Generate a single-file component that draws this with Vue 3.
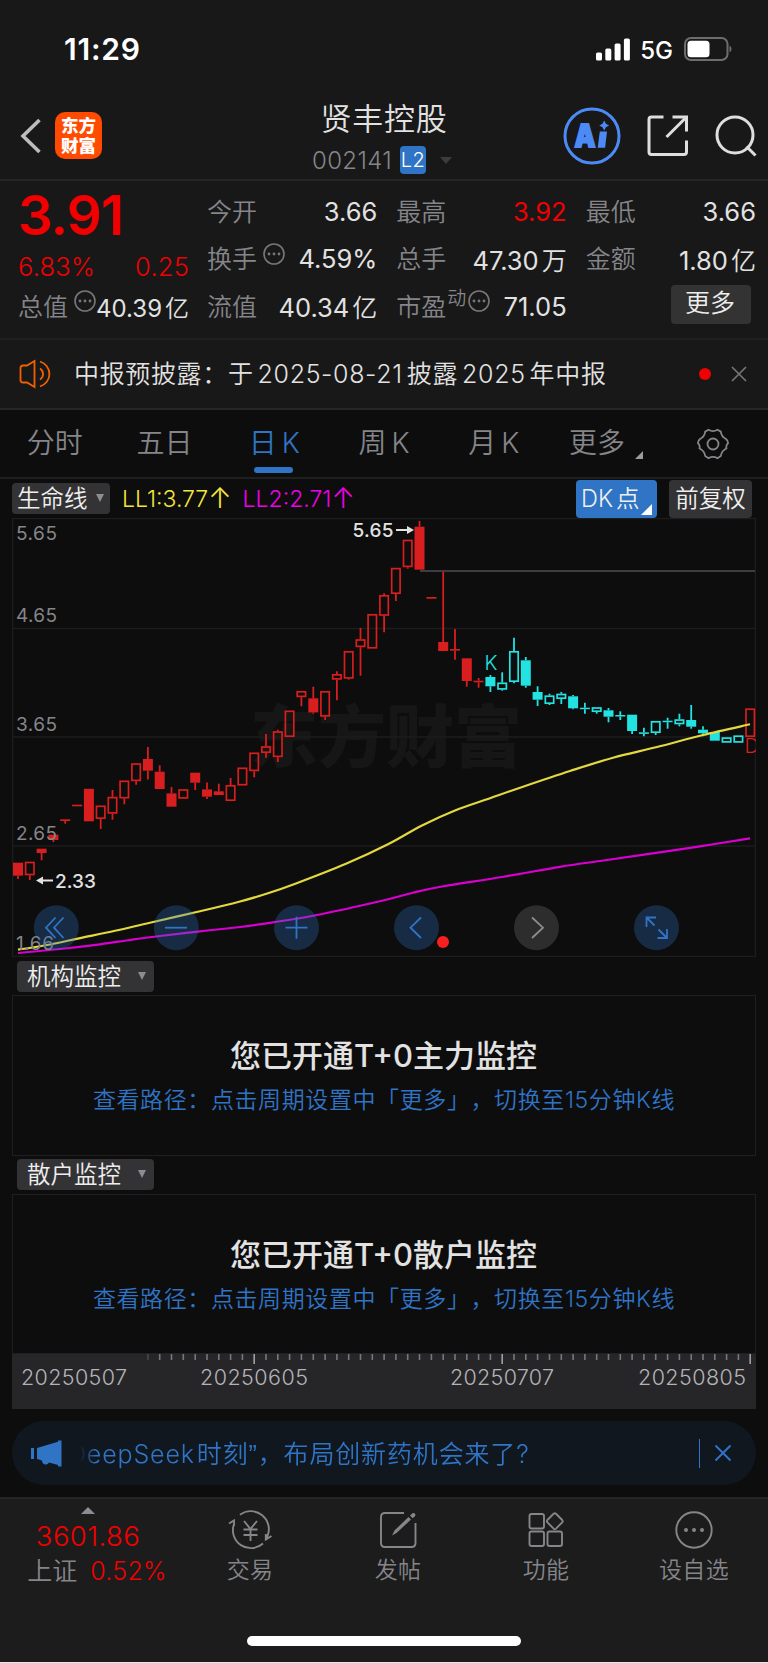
<template>
  <div class="app-page">
    <header class="top">
      <div class="status-bar">
        <span class="clock">11:29</span>
        <div class="status-icons">
          <svg class="signal" width="34" height="23" viewBox="0 0 34 23">
            <rect x="0" y="14.5" width="6" height="8" rx="1.6" />
            <rect x="9.3" y="10.5" width="6" height="12" rx="1.6" />
            <rect x="18.6" y="5.5" width="6" height="17" rx="1.6" />
            <rect x="27.9" y="0.5" width="6" height="22" rx="1.6" />
          </svg>
          <span class="network">5G</span>
          <svg class="battery" width="49" height="24" viewBox="0 0 49 24">
            <rect x="1" y="1" width="42.5" height="22" rx="6" class="battery-shell" />
            <rect x="3.5" y="3.7" width="22" height="16.6" rx="3.5" fill="#fff" />
            <path d="M45.5 8.5 a4 4 0 0 1 0 7z" fill="#6d6d6d" />
          </svg>
        </div>
      </div>

      <div class="nav-bar">
        <svg class="back" width="22" height="36" viewBox="0 0 22 36">
          <path d="M19.5 2 L3 18 L19.5 34" />
        </svg>
        <div class="logo"><span>东方</span><span>财富</span></div>
        <div class="title">
          <div class="stock-name">贤丰控股</div>
          <div class="stock-code">
            <span>002141</span><span class="level">L2</span><i class="caret"></i>
          </div>
        </div>
        <div class="actions">
          <svg width="58" height="58" viewBox="0 0 58 58">
            <circle cx="29" cy="29" r="27" fill="none" stroke="#4c8bf5" stroke-width="3" />
            <text x="11.5" y="39.5" textLength="21" lengthAdjust="spacingAndGlyphs" class="ai-text">A</text>
            <path d="M36.8 24.5h7.2l-1.9 16.2h-7.4z" fill="#4c8bf5" />
            <path d="M41.2 13.5l1.7 3.2 3.2 1.8-3.2 1.8-1.7 3.2-1.7-3.2-3.2-1.8 3.2-1.8z" fill="#4c8bf5" />
          </svg>
          <svg class="share" width="42" height="42" viewBox="0 0 42 42">
            <path d="M16.5 2H4.5Q2 2 2 4.5V37Q2 39.5 4.5 39.5H37Q39.5 39.5 39.5 37V25.5" />
            <path d="M25.5 2H39.5V16.5" />
            <path d="M38.5 3L19.5 22" />
          </svg>
          <svg class="search" width="42" height="42" viewBox="0 0 42 42">
            <circle cx="20" cy="20" r="18" />
            <path d="M31.5 31.5L40.5 40.5" />
          </svg>
        </div>
      </div>

      <section class="quote">
        <div class="quote-main">
          <div class="price">3.91</div>
          <div class="change"><span>6.83%</span><span>0.25</span></div>
          <div class="cell">
            <span class="label">总值</span>
            <DotsIcon class="info" />
            <span class="value small">40.39<b>亿</b></span>
          </div>
        </div>
        <div class="quote-grid">
          <div v-for="cell in cells" :key="cell.label" class="cell">
            <span class="label">{{ cell.label }}</span>
            <sup v-if="cell.sup" class="sup">{{ cell.sup }}</sup>
            <DotsIcon v-if="cell.info" class="info" />
            <span :class="['value', { up: cell.up }]">{{ cell.value }}<b v-if="cell.unit">{{ cell.unit }}</b></span>
          </div>
          <div class="cell"><button class="more">更多</button></div>
        </div>
      </section>

      <section class="notice">
        <svg class="horn" width="34" height="30" viewBox="0 0 34 30">
          <path d="M15.5 2L8 6.5H4Q1.5 6.5 1.5 9V21Q1.5 23.5 4 23.5H8L15.5 28Z" />
          <path d="M21 9.5A6.5 6.5 0 0 1 21 20.5" />
          <path d="M21 2.5A13 13 0 0 1 21 27.5" />
        </svg>
        <p class="notice-text">中报预披露：于<i></i>2025-08-21<i></i>披露<i></i>2025<i></i>年中报</p>
        <span class="dot"></span>
        <svg class="close" width="16" height="16" viewBox="0 0 16 16"><path d="M1 1L15 15M15 1L1 15" /></svg>
      </section>
    </header>

    <nav class="tabs">
      <div v-for="tab in tabs" :key="tab.text" :class="['tab', { active: tab.active }]">
        {{ tab.text }}<span v-if="tab.k" class="tab-k">K</span>
        <i v-if="tab.corner" class="corner"></i>
      </div>
      <div class="tab">
        <svg class="gear" width="32" height="32" viewBox="0 0 32 32">
          <path d="M11.5 1.8Q16 4.4 20.500 1.8L23.8 3.6Q24.4 8.600 29 11Q31.300 13 31 15.2Q28.800 17 29.400 20.500Q24.400 23 23.800 28L20.500 30.200Q16 27.600 11.500 30.200L8.200 28Q7.600 23 2.600 20.500Q3.200 17 1 15.200Q.7 13 3 11Q7.600 8.600 8.200 3.600Z" />
          <circle cx="16" cy="16" r="5.5" />
        </svg>
      </div>
    </nav>

    <section class="indicators">
      <span class="tag tag-line">生命线<i class="down"></i></span>
      <span class="ll yellow">LL1:3.77<em>↑</em></span>
      <span class="ll magenta">LL2:2.71<em>↑</em></span>
      <span class="chip blue">DK<b>点</b><i></i></span>
      <span class="chip">前复权</span>
    </section>

    <svg class="chart" width="744" height="439" viewBox="12 518 744 439">
      <text x="386" y="762" text-anchor="middle" class="watermark">东方财富</text>
      <g class="grid-lines">
        <rect x="12.5" y="518.5" width="743" height="438" />
        <path d="M12 628.5H756M12 737H756M12 846H756" />
      </g>
      <path d="M420 571H755" stroke="#3d3d3f" stroke-width="2" />

      <g v-for="(c, i) in candles" :key="i" :class="['candle', c[0]]">
        <path v-if="c[2] < c[3]" :d="`M${cx(i)} ${c[2]}V${c[3]}`" />
        <path v-if="c[5] > c[4]" :d="`M${cx(i)} ${c[4]}V${c[5]}`" />
        <rect
          v-if="c[1]"
          class="solid"
          :x="cx(i) - 5"
          :y="c[3]"
          :width="10"
          :height="c[4] - c[3]"
        />
        <rect
          v-else
          class="hollow"
          :x="cx(i) - 4.2"
          :y="c[3] + 0.8"
          :width="8.4"
          :height="c[4] - c[3] - 1.6"
        />
      </g>

      <path :d="smooth(yellowLine)" class="ma" stroke="#e3d93f" />
      <path :d="smooth(magentaLine)" class="ma" stroke="#d800d0" />

      <text x="484.5" y="670" class="mark" fill="#22e2e2">K</text>
      <text x="744.5" y="753" class="mark" fill="#d81e1e">D</text>

      <g class="axis-labels">
        <text x="16" y="539.5" textLength="41">5.65</text>
        <text x="16" y="621.5" textLength="41">4.65</text>
        <text x="16" y="731" textLength="41">3.65</text>
        <text x="16" y="840" textLength="41">2.65</text>
        <text x="16" y="949.5" textLength="38">1.66</text>
      </g>

      <g class="peak">
        <text x="352.5" y="537" textLength="41">5.65</text>
        <path d="M396 530H409" />
        <path d="M407 526L414 530L407 534Z" class="head" />
        <text x="55" y="888" textLength="41">2.33</text>
        <path d="M41 880.5H53" />
        <path d="M43 876.5L36 880.5L43 884.5Z" class="head" />
      </g>

      <g class="controls">
        <circle cx="56.3" cy="927.7" r="22.5" />
        <path d="M55.5 917.5L46 927.7L55.5 938M63.5 917.5L54 927.7L63.5 938" />
        <circle cx="176.3" cy="927.7" r="22.5" />
        <path d="M165 927.7H187" />
        <circle cx="296.5" cy="927.7" r="22.5" />
        <path d="M285.5 927.7H307.5M296.5 916.7V938.7" />
        <circle cx="416.5" cy="927.7" r="22.5" />
        <path d="M421 917.5L410.5 927.7L421 938" />
        <circle cx="536.5" cy="927.7" r="22.5" class="off" />
        <path d="M532 917.5L543 927.7L532 938" class="off" />
        <circle cx="656.5" cy="927.7" r="22.5" />
        <path d="M646.5 927V917.5H656M646.5 917.5L654.5 925.5M667 929V938H657.5M667 938L658.5 929.5" />
      </g>
      <circle cx="443" cy="942" r="6" fill="#f52020" />
    </svg>

    <template v-for="panel in panels" :key="panel.name">
      <div class="panel-head">
        <span class="tag">{{ panel.name }}<i class="down"></i></span>
      </div>
      <div class="panel">
        <h3>{{ panel.title }}</h3>
        <p>查看路径：点击周期设置中「更多」，切换至15分钟K线</p>
      </div>
    </template>

    <div class="timeline">
      <svg width="744" height="55" viewBox="12 1354 744 55">
        <rect
          v-for="n in 52"
          :key="n"
          :x="cx(n + 10) - 0.8"
          y="1354"
          width="1.6"
          :height="isMajor(n + 10) ? 10 : 6"
          :opacity="n === 1 ? 0.4 : 1"
          :class="{ major: isMajor(n + 10) }"
        />
        <text x="21" y="1384.5" textLength="106">20250507</text>
        <text x="200" y="1384.5" textLength="108">20250605</text>
        <text x="450" y="1384.5" textLength="104">20250707</text>
        <text x="638" y="1384.5" textLength="108">20250805</text>
      </svg>
    </div>

    <div class="banner-wrap">
      <div class="banner">
        <svg class="megaphone" width="31" height="27" viewBox="0 0 31 27">
          <path d="M0 8H3V19H0ZM6 8L27 1.8V0.5H30.5V26.5H27V25L18 22.5Q17 25 14 24.5Q11 23.5 11 20.5L6 19Z" />
        </svg>
        <div class="banner-clip">
          <span class="banner-text">DeepSeek<i></i>时刻<q>”</q>，布局创新药机会来了?</span>
        </div>
        <span class="bar"></span>
        <svg class="banner-close" width="18" height="18" viewBox="0 0 18 18"><path d="M1.5 1.5L16.5 16.5M16.5 1.5L1.5 16.5" /></svg>
      </div>
    </div>

    <footer class="bottom">
      <div class="bottom-items">
        <div class="index">
          <i class="up-caret"></i>
          <div class="index-value">3601.86</div>
          <div class="index-line"><span>上证</span><b>0.52%</b></div>
        </div>
        <div class="item">
          <svg width="44" height="40" viewBox="0 0 44 40">
            <path d="M12 4.8A18 18 0 0 1 39.5 26L38 29.5M43.5 26L37.8 29.5L37.8 24" />
            <path d="M35 33.5A18 18 0 0 1 6 14V10.5L1 13.5M6 10.5V16" />
            <path d="M16 11L22.5 19L29 11M15.5 19.5H29.5M15.5 25H29.5M22.5 19V31" />
          </svg>
          <span>交易</span>
        </div>
        <div class="item">
          <svg width="40" height="40" viewBox="0 0 40 40">
            <path d="M26 3H7Q3 3 3 7V33Q3 37 7 37H33.5Q37.5 37 37.5 33V13" />
            <path d="M14 25.5L16.5 20.5L30.5 7L33 9.5L18.5 23Z" class="fill" />
            <path d="M32 5.5L34.5 3.2Q36 2.5 37 3.7Q38 4.8 37 6.2L34.6 8.3Z" class="fill" />
          </svg>
          <span>发帖</span>
        </div>
        <div class="item">
          <svg width="40" height="40" viewBox="0 0 40 40">
            <rect x="3.5" y="4" width="14.5" height="14.5" rx="2" />
            <rect x="3.5" y="21.5" width="14.5" height="14.5" rx="2" />
            <rect x="21.5" y="21.5" width="14.5" height="14.5" rx="2" />
            <path d="M27.6 3.8Q28.8 2.7 30 3.8L36.2 10Q37.2 11.2 36.2 12.4L30 18.6Q28.8 19.7 27.6 18.6L21.4 12.4Q20.4 11.2 21.4 10Z" />
          </svg>
          <span>功能</span>
        </div>
        <div class="item">
          <svg width="40" height="40" viewBox="0 0 40 40">
            <circle cx="20" cy="20" r="17.7" />
            <circle cx="12" cy="20" r="2" class="fill" />
            <circle cx="20" cy="20" r="2" class="fill" />
            <circle cx="28" cy="20" r="2" class="fill" />
          </svg>
          <span>设自选</span>
        </div>
      </div>
      <div class="home-bar"></div>
    </footer>
  </div>
</template>

<script setup>
import { h } from 'vue'

// Small circled ellipsis shown next to some labels
const DotsIcon = () =>
  h('svg', { width: 22, height: 22, viewBox: '0 0 22 22' }, [
    h('circle', { cx: 11, cy: 11, r: 10, fill: 'none', stroke: '#77777b', 'stroke-width': 1.6 }),
    ...[6, 11, 16].map((x) => h('circle', { cx: x, cy: 11, r: 1.4, fill: '#77777b' }))
  ])

const cells = [
  { label: '今开', value: '3.66' },
  { label: '最高', value: '3.92', up: true },
  { label: '最低', value: '3.66' },
  { label: '换手', value: '4.59%', info: true },
  { label: '总手', value: '47.30', unit: '万' },
  { label: '金额', value: '1.80', unit: '亿' },
  { label: '流值', value: '40.34', unit: '亿' },
  { label: '市盈', value: '71.05', sup: '动', info: true }
]

const tabs = [
  { text: '分时' },
  { text: '五日' },
  { text: '日', k: true, active: true },
  { text: '周', k: true },
  { text: '月', k: true },
  { text: '更多', corner: true }
]

const panels = [
  { name: '机构监控', title: '您已开通T+0主力监控' },
  { name: '散户监控', title: '您已开通T+0散户监控' }
]

const cx = (i) => +(18 + i * 11.81).toFixed(1)
const isMajor = (i) => [20, 41, 62].includes(i)

// [color, filled, high, bodyTop, bodyBottom, low]
const candles = [
  ['r', 1, 862.7, 862.7, 875.7, 879],
  ['r', 0, 861.7, 861.7, 875.3, 880],
  ['r', 1, 848.7, 848.7, 853, 860.3],
  ['r', 1, 834.7, 834.7, 840, 842],
  ['r', 1, 819.3, 819.3, 821, 823.7],
  ['r', 1, 804.7, 804.7, 806.3, 806],
  ['r', 1, 788.8, 788.8, 821.3, 821],
  ['r', 0, 805.5, 805.5, 819, 829],
  ['r', 0, 790, 796.8, 813.7, 819.7],
  ['r', 0, 780.5, 780.5, 798.5, 804.3],
  ['r', 0, 763.2, 763.2, 781.2, 784.7],
  ['r', 1, 747, 759, 770.7, 779.5],
  ['r', 1, 765.3, 771.7, 789, 789],
  ['r', 1, 787, 793.4, 806.7, 806],
  ['r', 0, 789.2, 789.2, 798.7, 798],
  ['r', 1, 772.7, 772.7, 782.7, 790],
  ['r', 1, 782.4, 789.4, 796.7, 799],
  ['r', 1, 783.7, 791.3, 795, 795],
  ['r', 0, 778, 785, 801, 801],
  ['r', 0, 767.5, 767.5, 785.5, 785],
  ['r', 0, 752.5, 752.5, 771.2, 777.3],
  ['r', 0, 734, 746.2, 753, 757.7],
  ['r', 0, 729.7, 731.2, 757.2, 762],
  ['r', 0, 710.5, 710.5, 737, 737],
  ['r', 0, 691, 691, 697.2, 706.3],
  ['r', 1, 686.7, 698.3, 712.4, 713.7],
  ['r', 0, 691, 691, 716.7, 720],
  ['r', 0, 671.3, 674, 679.7, 700.3],
  ['r', 0, 651, 651, 678.7, 679.7],
  ['r', 0, 628, 639.2, 647.2, 675.7],
  ['r', 0, 614, 614, 648.6, 648],
  ['r', 0, 593.3, 595, 615.8, 632.3],
  ['r', 0, 567.8, 567.8, 594, 601],
  ['r', 0, 539.7, 539.7, 567.2, 568.7],
  ['r', 1, 521, 526.7, 569.7, 569],
  ['r', 1, 597, 597, 598.7, 598],
  ['r', 1, 571.7, 642, 651, 651],
  ['r', 1, 629, 649, 650.6, 659.7],
  ['r', 1, 658.3, 658.3, 681, 686.7],
  ['r', 1, 678, 680.7, 682.3, 687.7],
  ['c', 1, 675, 677, 686.3, 692],
  ['c', 0, 672.3, 682.5, 689.7, 690.7],
  ['c', 0, 637.7, 651, 682, 683.3],
  ['c', 1, 657, 660.3, 685.7, 687.7],
  ['c', 1, 686.3, 692, 699.7, 706],
  ['c', 0, 693.7, 695.4, 704, 705],
  ['c', 0, 692, 693.7, 699, 704],
  ['c', 1, 695, 696.3, 708.3, 709.3],
  ['c', 1, 702.7, 707.7, 709.2, 713.7],
  ['c', 0, 707.2, 707.2, 712, 713.7],
  ['c', 1, 708, 710.3, 716.7, 722.3],
  ['c', 1, 711.3, 715, 716.5, 720],
  ['c', 1, 714.7, 714.7, 731, 734],
  ['c', 1, 727.7, 732.3, 733.9, 736.3],
  ['c', 0, 721, 721, 733, 735],
  ['c', 1, 717.7, 720.7, 722.2, 728.7],
  ['c', 0, 713.7, 719.3, 724.3, 726.3],
  ['c', 1, 705, 720, 726.7, 728.7],
  ['c', 1, 726.3, 729.7, 733.3, 736.3],
  ['c', 1, 732, 732, 740.7, 740],
  ['c', 0, 737.3, 737.3, 742.7, 742],
  ['c', 0, 735.4, 735.4, 742.7, 742],
  ['r', 0, 708.4, 708.4, 737, 736]
]

const yellowLine = [
  [18, 949.7], [50, 944.5], [79, 938.3], [115, 930.8], [150, 922.7], [200, 911.3],
  [240, 901.5], [268, 893.3], [296, 883.5], [346, 863.8], [388, 844.3], [422, 825.5],
  [455, 810.5], [490, 798.2], [523, 786.7], [570, 771], [613, 757.7], [657, 747],
  [703, 735], [750, 724.3]
]
const magentaLine = [
  [18, 953], [60, 949], [100, 944.3], [130, 940], [160, 936], [200, 931.3],
  [240, 927], [273, 922.3], [317, 915], [381, 901], [412, 893], [442, 886.5],
  [502, 877], [560, 866.8], [600, 861], [644, 854.7], [700, 846.3], [750, 838.3]
]

// Catmull-Rom spline through the points, as cubic segments
const smooth = (pts) => {
  let d = `M${pts[0]}`
  for (let i = 0; i < pts.length - 1; i++) {
    const p0 = pts[i - 1] || pts[i]
    const [p1, p2] = [pts[i], pts[i + 1]]
    const p3 = pts[i + 2] || p2
    const a = [p1[0] + (p2[0] - p0[0]) / 6, p1[1] + (p2[1] - p0[1]) / 6]
    const b = [p2[0] - (p3[0] - p1[0]) / 6, p2[1] - (p3[1] - p1[1]) / 6]
    d += `C${a} ${b} ${p2}`
  }
  return d
}
</script>

<style>
html,
body {
  margin: 0;
  background: #0d0d0d;
}
</style>

<style scoped>
.app-page {
  width: 768px;
  height: 1663px;
  overflow: hidden;
  display: flex;
  flex-direction: column;
  background: #0d0d0d;
  color: #e2e2e2;
  font-family: Inter, "Noto Sans CJK SC", sans-serif;
  font-weight: 350;
}

i,
em {
  font-style: normal;
}

.top {
  background: #181818;
}

.status-bar {
  height: 98px;
  padding: 0 35px 0 64px;
  display: flex;
  align-items: center;
  justify-content: space-between;
  box-sizing: border-box;
}

.clock {
  font-size: 30px;
  font-weight: 600;
  letter-spacing: 0.8px;
  color: #fff;
}

.status-icons {
  display: flex;
  align-items: center;
}

.signal {
  fill: #fff;
}

.network {
  margin: 3px 11px 0 10px;
  font-size: 24px;
  font-weight: 500;
  line-height: 24px;
  color: #fff;
}

.battery-shell {
  fill: none;
  stroke: #6d6d6d;
  stroke-width: 2;
}

.nav-bar {
  position: relative;
  height: 83px;
  box-sizing: border-box;
  padding: 0 11px 5px 20px;
  display: flex;
  align-items: center;
  border-bottom: 2px solid #262626;
}

.back {
  fill: none;
  stroke: #bdbdbd;
  stroke-width: 3.6;
}

.logo {
  width: 47px;
  height: 47px;
  margin-left: 13px;
  margin-top: -1px;
  border-radius: 10px;
  background: #ff4a00;
  display: flex;
  flex-direction: column;
  align-items: center;
  justify-content: center;
  color: #fff;
  font-size: 17.5px;
  font-weight: 900;
  line-height: 19.5px;
}

.title {
  position: absolute;
  left: 0;
  right: 0;
  top: 0;
  display: flex;
  flex-direction: column;
  align-items: center;
}

.stock-name {
  margin-top: 1px;
  font-size: 31px;
  letter-spacing: 0.8px;
  line-height: 40px;
}

.stock-code {
  display: flex;
  align-items: center;
  height: 28px;
  margin-top: 7px;
  margin-left: -4px;
  font-size: 24px;
  letter-spacing: 0.3px;
  color: #85858a;
}

.level {
  width: 26px;
  height: 28px;
  margin-left: 8px;
  border-radius: 4px;
  background: #2f74c5;
  color: #fff;
  font-size: 20px;
  line-height: 28px;
  text-align: center;
}

.caret {
  margin-left: 14px;
  border: 6.5px solid transparent;
  border-top: 7px solid #3c3c3c;
  border-bottom: 0;
}

.actions {
  margin-left: auto;
  display: flex;
  align-items: center;
}

.ai-text {
  fill: #4c8bf5;
  stroke: #4c8bf5;
  stroke-width: 1.8;
  font-size: 31px;
  font-weight: 900;
}

.share,
.search {
  margin-left: 26px;
  fill: none;
  stroke: #dedede;
  stroke-width: 3;
}

.quote {
  height: 159px;
  box-sizing: border-box;
  padding: 7px 12px 0 18px;
  display: flex;
  gap: 18px;
  border-bottom: 2px solid #202020;
}

.quote-main {
  width: 171px;
  display: flex;
  flex-direction: column;
}

.price {
  height: 55px;
  line-height: 55px;
  font-size: 55px;
  font-weight: 600;
  letter-spacing: -1px;
  color: #f00000;
}

.change {
  height: 40px;
  line-height: 47px;
  display: flex;
  justify-content: space-between;
  font-size: 25.5px;
  letter-spacing: 0.2px;
  color: #f00000;
}

.quote-grid {
  flex: 1;
  display: grid;
  grid-template-columns: repeat(3, 1fr);
  grid-auto-rows: 47.5px;
  column-gap: 19px;
}

.cell {
  height: 47.5px;
  display: flex;
  align-items: center;
}

.label {
  flex: none;
  margin-top: -4px;
  font-size: 25px;
  color: #85858a;
}

.sup {
  font-size: 19px;
  line-height: 20px;
  margin: -16px 0 0 1px;
  color: #85858a;
}

.info {
  flex: none;
  margin: -11px 0 0 6px;
}

.sup + .info {
  margin-left: 2px;
}

.value {
  margin-left: auto;
  margin-top: -1px;
  font-size: 25.5px;
  font-weight: 400;
  white-space: nowrap;
}

.value b {
  margin-left: 3px;
  font-weight: 350;
  font-size: 25px;
}

.value.small,
.value.small b {
  font-size: 24px;
}

.value.up {
  color: #f00000;
}

.more {
  width: 80px;
  height: 39px;
  margin: 0 5px 5px auto;
  border: 0;
  border-radius: 4px;
  background: #333;
  color: #eee;
  font: inherit;
  font-size: 25px;
  line-height: 37px;
  padding: 0 2px 2px 0;
}

.notice {
  height: 70px;
  box-sizing: border-box;
  padding: 0 21px 1px 19px;
  display: flex;
  align-items: center;
  border-bottom: 2px solid #262626;
}

.horn {
  fill: none;
  stroke: #f06000;
  stroke-width: 1.8;
}

.notice-text {
  margin: -4px 0 0 21px;
  font-size: 25px;
  letter-spacing: 0.65px;
  white-space: nowrap;
}

.notice-text i {
  margin-left: 4px;
}

.dot {
  width: 12px;
  height: 12px;
  margin-left: auto;
  border-radius: 50%;
  background: #f00000;
}

.close {
  margin-left: 20px;
  stroke: #77777b;
  stroke-width: 1.6;
}

.tabs {
  height: 69px;
  box-sizing: border-box;
  display: grid;
  grid-template-columns: repeat(7, 1fr);
  border-bottom: 2px solid #1f1f1f;
}

.tab {
  position: relative;
  display: flex;
  align-items: center;
  justify-content: center;
  font-size: 28px;
  line-height: 67px;
  color: #85858a;
}

.tab-k {
  margin-left: 5px;
}

.tab.active {
  color: #2f74c5;
}

.tab.active::after {
  content: "";
  position: absolute;
  left: 50%;
  bottom: 4px;
  width: 39px;
  height: 6px;
  margin-left: -20px;
  border-radius: 3px;
  background: #2f74c5;
}

.corner {
  margin: 22px -5px 0 10px;
  border-left: 8px solid transparent;
  border-bottom: 8px solid #9a9aa0;
}

.gear {
  fill: none;
  stroke: #85858a;
  stroke-width: 1.8;
}

.indicators {
  height: 39px;
  box-sizing: border-box;
  padding: 0 16px 0 12px;
  display: flex;
  align-items: center;
}

.tag {
  height: 31px;
  border-radius: 4px;
  background: #333335;
  color: #eee;
  font-size: 23.5px;
  line-height: 31px;
  display: flex;
  align-items: center;
}

.tag-line {
  width: 93px;
  padding-left: 5px;
}

.down {
  margin-left: 17px;
  margin-top: -1px;
  border: 4.5px solid transparent;
  border-top: 8px solid #8c8c92;
  border-bottom: 0;
}

.tag-line .down {
  margin-left: 8px;
}

.ll {
  display: flex;
  align-items: center;
  font-size: 23px;
  line-height: 30px;
  margin-left: 12px;
}

.ll em {
  font-size: 28px;
  font-weight: 300;
  margin: -2px -1px 0 0;
}

.yellow {
  color: #f2e63c;
}

.magenta {
  color: #f000e8;
}

.chip {
  position: relative;
  width: 83px;
  height: 38px;
  margin-left: 12px;
  border-radius: 4px;
  background: #333335;
  color: #f0f0f0;
  font-size: 23.5px;
  line-height: 38px;
  text-align: center;
}

.chip.blue {
  width: 76px;
  margin-left: auto;
  padding-left: 5px;
  text-align: left;
  background: #2f74c5;
}

.chip b {
  margin-left: 3px;
  font-weight: 350;
}

.chip i {
  position: absolute;
  right: 5px;
  bottom: 3px;
  border-left: 11px solid transparent;
  border-bottom: 11px solid #fff;
}

.chart {
  flex: none;
  display: block;
  margin-left: 12px;
}

.watermark {
  font-size: 68px;
  font-weight: 900;
  fill: #161616;
}

.grid-lines {
  fill: none;
  stroke: #1d1d1e;
  stroke-width: 1.5;
}

.candle.r {
  stroke: #d81e1e;
  fill: #d81e1e;
}

.candle.c {
  stroke: #22e2e2;
  fill: #22e2e2;
}

.candle path {
  stroke-width: 1.8;
}

.candle .solid {
  stroke: none;
}

.candle .hollow {
  fill: none;
  stroke-width: 1.7;
}

.ma {
  fill: none;
  stroke-width: 2.2;
  stroke-linejoin: round;
}

.mark {
  font-size: 20px;
}

.axis-labels {
  fill: #85858a;
  font-size: 19px;
  font-weight: 400;
}

.peak {
  fill: #e2e2e2;
  stroke: none;
  font-size: 19px;
  font-weight: 500;
}

.peak path {
  stroke: #e2e2e2;
  stroke-width: 2;
}

.peak .head {
  stroke: none;
}

.controls {
  fill: none;
  stroke: #2f74c5;
  stroke-width: 1.8;
}

.controls circle {
  stroke: none;
  fill: #2f74c5;
  fill-opacity: 0.3;
}

.controls circle.off {
  fill: #77777b;
}

.controls path.off {
  stroke: #8c8c92;
}

.panel-head {
  height: 38px;
  padding-left: 17px;
  display: flex;
  align-items: center;
}

.panel-head .tag {
  width: 127px;
  padding-left: 10px;
}

.panel {
  height: 160.5px;
  margin: 0 12px;
  box-sizing: border-box;
  border: 1px solid #1f1f20;
  text-align: center;
}

.panel h3 {
  margin: 38px 1px 0 0;
  font-size: 31px;
  font-weight: 500;
  line-height: 44px;
}

.panel p {
  margin: 5px 0 0;
  font-size: 23px;
  letter-spacing: 0.6px;
  line-height: 34px;
  text-spacing-trim: space-all;
  color: #2f74c5;
}

.timeline {
  height: 55px;
  margin: 0 12px;
  background: #262628;
  fill: #77777b;
}

.timeline .major {
  fill: #a0a0a4;
}

.timeline text {
  fill: #b4b4b8;
  font-size: 21.5px;
}

.banner-wrap {
  padding: 12px;
}

.banner {
  height: 64px;
  padding: 0 24px 0 19px;
  border-radius: 32px;
  background: #10171e;
  display: flex;
  align-items: center;
}

.megaphone {
  fill: #2f74c5;
}

.banner-clip {
  flex: 1;
  margin-left: 18px;
  margin-top: -3px;
  overflow: hidden;
  -webkit-mask-image: linear-gradient(to right, transparent, #000 16px);
  mask-image: linear-gradient(to right, transparent, #000 16px);
}

.banner-text {
  display: block;
  margin-left: -12px;
  font-size: 25px;
  letter-spacing: 0.85px;
  white-space: nowrap;
  color: #2f74c5;
}

.banner-text i {
  margin-left: 2px;
}

.banner-text q {
  font-family: "Liberation Sans", sans-serif;
  quotes: none;
}

.bar {
  width: 1.5px;
  height: 29px;
  background: #2f74c5;
}

.banner-close {
  margin-left: 14px;
  stroke: #2f74c5;
  stroke-width: 2;
}

.bottom {
  flex: 1;
  display: flex;
  flex-direction: column;
  align-items: center;
  background: #1c1c1c;
  border-top: 2px solid #252525;
  border-bottom: 1px solid #e8e8e8;
}

.bottom-items {
  width: 768px;
  height: 137px;
  display: grid;
  grid-template-columns: 176px repeat(4, 148px);
}

.index {
  display: flex;
  flex-direction: column;
  align-items: center;
  color: #f00000;
}

.up-caret {
  margin-top: 8px;
  border: 7px solid transparent;
  border-bottom: 7px solid #8c8c92;
  border-top: 0;
}

.index-value {
  margin-top: 5px;
  font-size: 27.5px;
  letter-spacing: 0.4px;
  line-height: 35px;
}

.index-line {
  display: flex;
  margin-left: 18px;
  font-size: 25px;
  line-height: 34px;
}

.index-line span {
  color: #85858a;
}

.index-line b {
  margin-left: 13px;
  font-weight: 350;
  letter-spacing: 0.3px;
}

.item {
  display: flex;
  flex-direction: column;
  align-items: center;
  padding-top: 11px;
  font-size: 23px;
  color: #85858a;
  letter-spacing: 0.3px;
}

.item svg {
  fill: none;
  stroke: #85858a;
  stroke-width: 1.9;
}

.item svg .fill {
  fill: #85858a;
  stroke: none;
}

.item span {
  margin-top: 4px;
  line-height: 32px;
}

.home-bar {
  width: 274px;
  height: 10px;
  border-radius: 5px;
  background: #fff;
}
</style>
